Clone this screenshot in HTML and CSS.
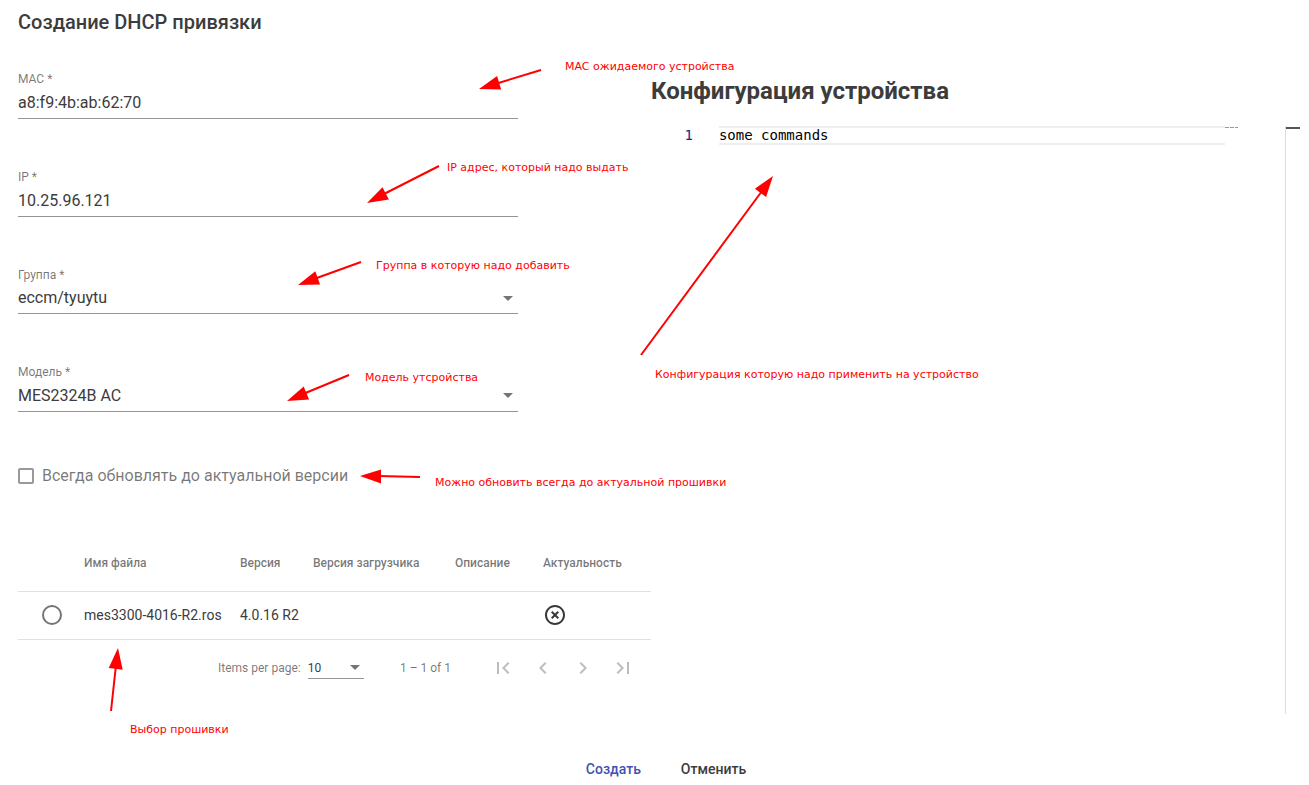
FILE: index.html
```html
<!DOCTYPE html>
<html lang="ru">
<head>
	<meta charset="UTF-8">
	<title>Создание DHCP привязки</title>
	<link rel="stylesheet" href="styles.css">
</head>
<body>

	<div class="dialog">
		<h1 class="dialog-title">Создание DHCP привязки</h1>

		<div class="dialog-content">
			<div class="form-col">
				<div class="field">
					<div class="field-label">MAC *</div>
					<div class="field-value">a8:f9:4b:ab:62:70</div>
				</div>
				<div class="field">
					<div class="field-label">IP *</div>
					<div class="field-value">10.25.96.121</div>
				</div>
				<div class="field">
					<div class="field-label">Группа *</div>
					<div class="field-value">eccm/tyuytu<span class="caret"></span></div>
				</div>
				<div class="field">
					<div class="field-label">Модель *</div>
					<div class="field-value">MES2324B AC<span class="caret"></span></div>
				</div>

				<label class="check">
					<span class="check-box"></span>
					Всегда обновлять до актуальной версии
				</label>

				<table class="fw-table">
					<thead>
						<tr>
							<th class="col-radio"></th>
							<th class="col-name">Имя файла</th>
							<th class="col-ver">Версия</th>
							<th class="col-boot">Версия загрузчика</th>
							<th class="col-desc">Описание</th>
							<th class="col-actual">Актуальность</th>
						</tr>
					</thead>
					<tbody>
						<tr>
							<td class="radio-cell"><span class="radio"></span></td>
							<td>mes3300-4016-R2.ros</td>
							<td>4.0.16 R2</td>
							<td></td>
							<td></td>
							<td>
								<svg class="icon icon-dark" viewBox="0 0 24 24"><path d="M14.59 8L12 10.59 9.41 8 8 9.41 10.59 12 8 14.59 9.41 16 12 13.41 14.59 16 16 14.59 13.41 12 16 9.41 14.59 8zM12 2C6.47 2 2 6.47 2 12s4.47 10 10 10 10-4.47 10-10S17.53 2 12 2zm0 18c-4.41 0-8-3.59-8-8s3.59-8 8-8 8 3.59 8 8-3.59 8-8 8z"/></svg>
							</td>
						</tr>
					</tbody>
				</table>

				<div class="paginator">
					<span class="page-label">Items per page:</span>
					<span class="page-select">10<span class="caret"></span></span>
					<span class="page-range">1 – 1 of 1</span>
					<span class="page-btn"><svg class="icon" viewBox="0 0 24 24"><path d="M18.41 16.59L13.82 12l4.59-4.59L17 6l-6 6 6 6zM6 6h2v12H6z"/></svg></span>
					<span class="page-btn"><svg class="icon" viewBox="0 0 24 24"><path d="M15.41 7.41L14 6l-6 6 6 6 1.41-1.41L10.83 12z"/></svg></span>
					<span class="page-btn"><svg class="icon" viewBox="0 0 24 24"><path d="M10 6L8.59 7.41 13.17 12l-4.58 4.59L10 18l6-6z"/></svg></span>
					<span class="page-btn"><svg class="icon" viewBox="0 0 24 24"><path d="M5.59 7.41L10.18 12l-4.59 4.59L7 18l6-6-6-6zM16 6h2v12h-2z"/></svg></span>
				</div>
			</div>

			<div class="config-col">
				<h2 class="config-title">Конфигурация устройства</h2>
				<div class="editor">
					<div class="editor-gutter">1</div>
					<div class="editor-line">some commands</div>
					<div class="editor-minimap"></div>
					<div class="editor-ruler"></div>
				</div>
			</div>
		</div>

		<div class="dialog-actions">
			<button class="btn btn-primary">Создать</button>
			<button class="btn">Отменить</button>
		</div>
	</div>

	<!-- annotations drawn on top of the screenshot -->
	<svg class="arrows" viewBox="0 0 1309 785">
		<g class="arrow">
			<line x1="541" y1="70" x2="495" y2="84"/>
			<polygon points="479,89 501.2,89.5 497.1,76.1"/>
		</g>
		<g class="arrow">
			<line x1="439" y1="166" x2="382" y2="195"/>
			<polygon points="367,203 388.9,199.6 382.5,187.2"/>
		</g>
		<g class="arrow">
			<line x1="361" y1="262" x2="314" y2="279"/>
			<polygon points="298,285 320.1,284.4 315.3,271.2"/>
		</g>
		<g class="arrow">
			<line x1="349" y1="375" x2="303" y2="394"/>
			<polygon points="287,401 309.1,399.4 303.7,386.4"/>
		</g>
		<g class="arrow">
			<line x1="420" y1="477" x2="378" y2="476"/>
			<polygon points="360,476 381,483.4 381,469.4"/>
		</g>
		<g class="arrow">
			<line x1="641" y1="355" x2="762" y2="191"/>
			<polygon points="773,176 766.1,197.1 754.9,188.7"/>
		</g>
		<g class="arrow">
			<line x1="111" y1="711" x2="116" y2="665"/>
			<polygon points="118,648 122.7,669.7 108.7,668.1"/>
		</g>
	</svg>
	<span class="note note-mac">MAC ожидаемого устройства</span>
	<span class="note note-ip">IP адрес, который надо выдать</span>
	<span class="note note-group">Группа в которую надо добавить</span>
	<span class="note note-model">Модель утсройства</span>
	<span class="note note-config">Конфигурация которую надо применить на устройство</span>
	<span class="note note-update">Можно обновить всегда до актуальной прошивки</span>
	<span class="note note-fw">Выбор прошивки</span>

</body>
</html>
```

FILE: styles.css
```css
html, body { height: 100%; overflow: hidden }
body {
	margin: 0;
	background: #fff;
	color: #3c3c3c;
	font-family: Roboto, "Noto Sans", sans-serif;
	font-size: 14px;
}
.dialog { padding: 6px 0 0 18px }
.dialog-title {
	margin: 0 0 34px;
	font-size: 20px;
	font-weight: 500;
	line-height: 32px;
}
.dialog-content { display: flex }
.form-col {
	display: flex;
	flex-direction: column;
	width: 633px;
	flex: none;
}

.field {
	width: 500px;
	margin-bottom: 50.67px;
	padding-top: .4px;
	padding-bottom: 5px;
	border-bottom: 1px solid rgba(0, 0, 0, .42);
}
.field-label {
	height: 14px;
	margin-bottom: 6.6px;
	font-size: 12px;
	line-height: 14px;
	color: rgba(0, 0, 0, .54);
}
.field-value {
	display: flex;
	justify-content: space-between;
	align-items: center;
	padding-right: 5px;
	font-size: 16px;
	line-height: 20px;
}
.caret {
	width: 0;
	height: 0;
	border-left: 5px solid transparent;
	border-right: 5px solid transparent;
	border-top: 5px solid rgba(0, 0, 0, .54);
}

.check {
	display: flex;
	align-items: center;
	gap: 8px;
	height: 24px;
	margin-top: 1.33px;
	font-size: 16px;
	color: rgba(0, 0, 0, .54);
}
.check-box {
	width: 16px;
	height: 16px;
	box-sizing: border-box;
	border: 2px solid rgba(0, 0, 0, .4);
	border-radius: 2px;
}

.fw-table {
	width: 633px;
	margin-top: 47px;
	table-layout: fixed;
	border-collapse: collapse;
	text-align: left;
}
.fw-table th {
	height: 56px;
	padding: 0;
	font-size: 12px;
	font-weight: 500;
	color: rgba(0, 0, 0, .54);
	white-space: nowrap;
	border-bottom: 1px solid #e0e0e0;
}
.fw-table td {
	height: 46px;
	padding: 0 0 1px;
	border-bottom: 1px solid #e0e0e0;
}
.col-radio { width: 66px }
.col-name { width: 156px }
.col-ver { width: 73px }
.col-boot { width: 142px }
.col-desc { width: 88px }
.col-actual { width: 108px }
.fw-table .radio-cell { padding-left: 24px }
.radio {
	display: block;
	width: 20px;
	height: 20px;
	box-sizing: border-box;
	border: 2px solid rgba(0, 0, 0, .54);
	border-radius: 50%;
}

.icon { display: block; width: 24px; height: 24px; fill: rgba(0, 0, 0, .26) }
.icon-dark { fill: rgba(0, 0, 0, .78) }

.paginator {
	display: flex;
	align-items: center;
	height: 56px;
	padding-right: 8px;
	font-size: 12px;
	color: rgba(0, 0, 0, .54);
	white-space: nowrap;
}
.page-label { margin-left: 200px; margin-right: 7px }
.page-select {
	display: flex;
	justify-content: space-between;
	align-items: center;
	width: 57px;
	height: 22px;
	margin-top: 1px;
	box-sizing: border-box;
	padding-right: 4px;
	color: #3c3c3c;
	border-bottom: 1px solid rgba(0, 0, 0, .42);
}
.page-range { margin-left: 36px; margin-right: 32px }
.page-btn {
	display: flex;
	justify-content: center;
	flex: none;
	width: 40px;
}

.config-col { flex: none; width: 649px }
.config-title {
	margin: 3px 0 19px;
	font-size: 24px;
	font-weight: 700;
	line-height: 32px;
}
.editor {
	display: flex;
	height: 588px;
	font-family: "DejaVu Sans Mono", monospace;
	font-size: 14px;
}
.editor-gutter {
	width: 42px;
	margin-right: 26px;
	text-align: right;
	line-height: 19px;
	color: #12288c;
}
.editor-line {
	width: 507px;
	height: 19px;
	box-sizing: border-box;
	border-top: 2px solid #eee;
	border-bottom: 2px solid #eee;
	line-height: 15px;
	color: #000;
}
.editor-minimap {
	width: 13px;
	height: 1px;
	margin-top: 1px;
	margin-right: 47px;
	background: repeating-linear-gradient(90deg, #999 0 4px, #fff 4px 5px);
}
.editor-ruler {
	position: relative;
	flex: none;
	width: 14px;
	border-left: 1px solid #ddd;
}
.editor-ruler::before {
	content: "";
	position: absolute;
	top: 1px;
	left: 0;
	right: 0;
	height: 2px;
	background: #555;
}

.dialog-actions {
	display: flex;
	justify-content: center;
	gap: 8px;
	padding-left: 5px;
	margin-top: 37px;
}
.btn {
	height: 36px;
	padding: 0 16px;
	border: 0;
	background: none;
	font: 500 14px/36px Roboto, sans-serif;
	color: #3c3c3c;
}
.btn-primary { color: #3f51b5 }

.arrows {
	position: absolute;
	top: 0;
	left: 0;
	width: 1309px;
	height: 785px;
	pointer-events: none;
}
.arrow line { stroke: #f00; stroke-width: 2 }
.arrow polygon { fill: #f00 }

.note {
	position: absolute;
	font-family: "DejaVu Sans", sans-serif;
	font-size: 11px;
	line-height: 14px;
	color: #f00;
	white-space: nowrap;
}
.note-mac { left: 565px; top: 60px }
.note-ip { left: 447px; top: 161px }
.note-group { left: 376px; top: 259px }
.note-model { left: 365px; top: 371px }
.note-config { left: 655px; top: 368px }
.note-update { left: 435px; top: 476px }
.note-fw { left: 130px; top: 723px }
```
